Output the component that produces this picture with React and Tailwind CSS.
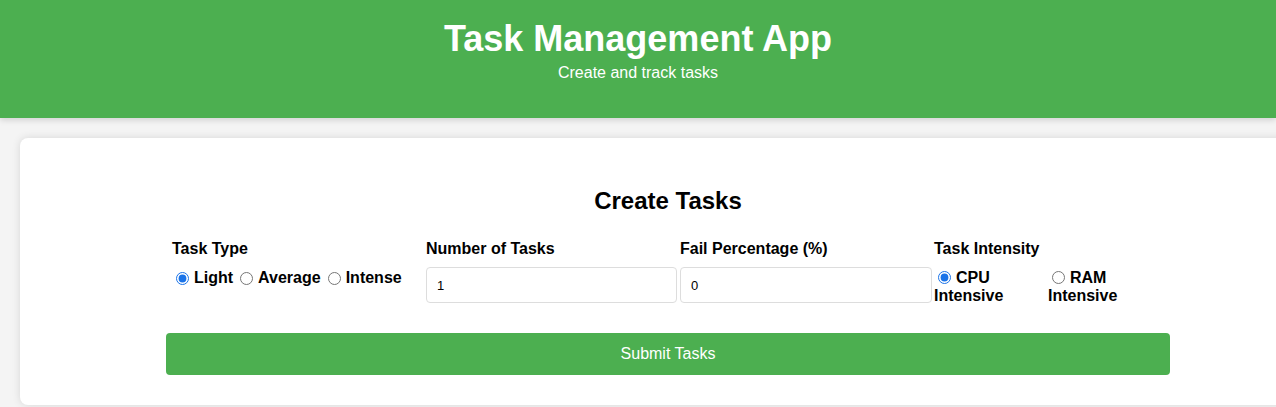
import React, { useState } from "react";

const App = () => {
  const [taskType, setTaskType] = useState("light");
  const [intensity, setIntensity] = useState("cpu");
  const [count, setCount] = useState("1");
  const [fail, setFail] = useState("0");

  return (
    <div className="min-h-screen w-full overflow-hidden bg-[#f4f4f4] font-['Liberation_Sans',Arial,sans-serif] text-black">
      <header className="relative z-10 flex h-[118px] flex-col items-center bg-[#4caf50] pt-[18px] text-white shadow-[0_2px_6px_rgba(0,0,0,0.15)]">
        <h1 className="text-[36px] font-bold leading-[41px]">Task Management App</h1>
        <p className="mt-[5px] text-[16px] leading-[18px]">Create and track tasks</p>
      </header>

      <div className="mt-[20px] ml-[20px] w-[1296px] rounded-lg bg-white pt-[49px] pb-[30px] shadow-[0_0_8px_rgba(0,0,0,0.12)]">
        <h2 className="text-center text-[24px] font-bold leading-[28px]">Create Tasks</h2>

        <div className="mt-[25px] ml-[152px] flex">
          <div className="w-[254px]">
            <div className="text-[16px] font-bold leading-[18px]">Task Type</div>
            <div className="mt-[11px] flex items-center gap-[3px] text-[16px] font-bold leading-[18px]">
              {[
                ["light", "Light"],
                ["average", "Average"],
                ["intense", "Intense"],
              ].map(([v, l]) => (
                <label key={v} className="flex items-center">
                  <input
                    type="radio"
                    name="type"
                    checked={taskType === v}
                    onChange={() => setTaskType(v)}
                    className="mr-[5px] ml-[4px] h-[13px] w-[13px] accent-[#1a73e8]"
                  />
                  {l}
                </label>
              ))}
            </div>
          </div>

          <div className="w-[254px]">
            <div className="text-[16px] font-bold leading-[18px]">Number of Tasks</div>
            <input
              type="number"
              value={count}
              onChange={(e) => setCount(e.target.value)}
              className="mt-[9px] h-[36px] w-[251px] rounded-[4px] border border-[#ddd] px-[10px] text-[13px] outline-none"
            />
          </div>

          <div className="w-[254px]">
            <div className="text-[16px] font-bold leading-[18px]">Fail Percentage (%)</div>
            <input
              type="number"
              value={fail}
              onChange={(e) => setFail(e.target.value)}
              className="mt-[9px] h-[36px] w-[252px] rounded-[4px] border border-[#ddd] px-[10px] text-[13px] outline-none"
            />
          </div>

          <div className="w-[254px]">
            <div className="text-[16px] font-bold leading-[18px]">Task Intensity</div>
            <div className="mt-[11px] flex text-[16px] font-bold leading-[18px]">
              {[
                ["cpu", "CPU", "Intensive"],
                ["ram", "RAM", "Intensive"],
              ].map(([v, a, b]) => (
                <label key={v} className="block w-[114px]">
                  <input
                    type="radio"
                    name="intensity"
                    checked={intensity === v}
                    onChange={() => setIntensity(v)}
                    className="mr-[5px] ml-[4px] h-[13px] w-[13px] align-[-1px] accent-[#1a73e8]"
                  />
                  {a} {b}
                </label>
              ))}
            </div>
          </div>
        </div>

        <button className="mt-[28px] ml-[146px] h-[42px] w-[1004px] rounded-[4px] bg-[#4caf50] text-[16px] text-white">
          Submit Tasks
        </button>
      </div>
    </div>
  );
};

export default App;
